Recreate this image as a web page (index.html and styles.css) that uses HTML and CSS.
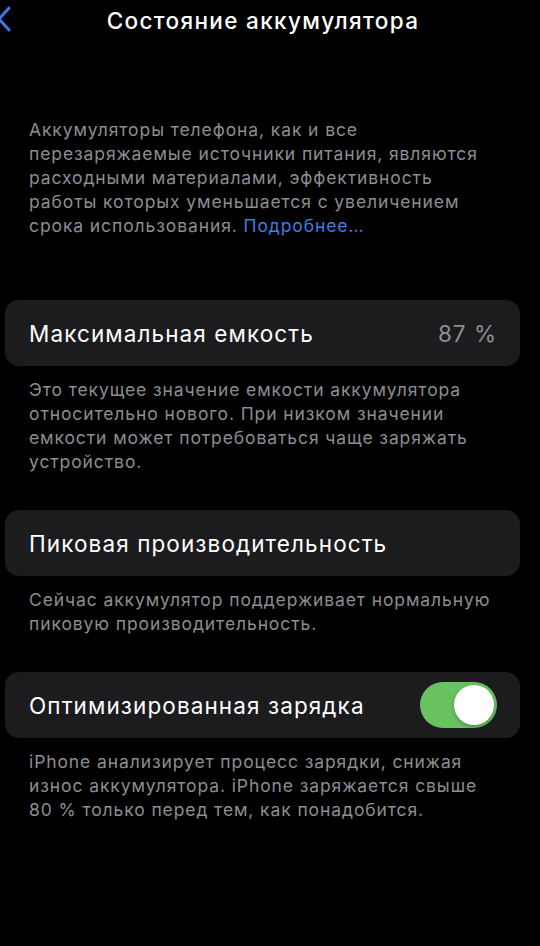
FILE: index.html
```html
<!DOCTYPE html>
<html lang="ru">
<head>
    <meta charset="UTF-8">
    <meta name="viewport" content="width=device-width, initial-scale=1.0">
    <title>Состояние аккумулятора</title>
    <link rel="stylesheet" href="styles.css">
</head>
<body>
    <div class="navbar">
        <button class="back-btn" aria-label="Назад">
            <svg width="14" height="30" viewBox="0 0 14 30">
                <path d="M11 4 L1 15 L11 26" fill="none" stroke="#3b78e7" stroke-width="3" stroke-linecap="round" stroke-linejoin="round"/>
            </svg>
        </button>
        <h1>Состояние аккумулятора</h1>
    </div>

    <p class="intro">Аккумуляторы телефона, как и все перезаряжаемые источники питания, являются расходными материалами, эффективность работы которых уменьшается с увеличением срока использования. <a href="#">Подробнее…</a></p>

    <div class="group group-first">
        <div class="cell">
            <span class="cell-label">Максимальная емкость</span>
            <span class="cell-value">87 %</span>
        </div>
        <p class="footnote">Это текущее значение емкости аккумулятора относительно нового. При низком значении емкости может потребоваться чаще заряжать устройство.</p>
    </div>

    <div class="group">
        <div class="cell">
            <span class="cell-label">Пиковая производительность</span>
        </div>
        <p class="footnote">Сейчас аккумулятор поддерживает нормальную пиковую производительность.</p>
    </div>

    <div class="group">
        <div class="cell">
            <span class="cell-label">Оптимизированная зарядка</span>
            <label class="switch">
                <input type="checkbox" class="switch-input" checked>
                <span class="switch-track"></span>
            </label>
        </div>
        <p class="footnote">iPhone анализирует процесс зарядки, снижая износ аккумулятора. iPhone заряжается свыше 80&nbsp;% только перед тем, как понадобится.</p>
    </div>
</body>
</html>
```

FILE: styles.css
```css
body {
    margin: 0;
    padding: 0;
    background-color: #000;
    color: #fff;
    font-family: Inter, "Noto Sans", sans-serif;
    -webkit-font-smoothing: antialiased;
}

.navbar {
    display: flex;
    align-items: center;
    justify-content: center;
    position: relative;
    height: 40px;
}

.navbar h1 {
    margin: 0 0 0 -14px;
    font-size: 22.5px;
    font-weight: 500;
    letter-spacing: 1.35px;
}

.back-btn {
    position: absolute;
    left: -2px;
    top: 4px;
    background: transparent;
    border: none;
    padding: 0;
    cursor: pointer;
}

.intro {
    margin: 78px 0 0;
    padding: 0 43px 0 29px;
    font-size: 17.5px;
    line-height: 24px;
    letter-spacing: 0.9px;
    color: #8d8d92;
}

.intro a {
    color: #3e7be6;
    text-decoration: none;
}

.group {
    margin-top: 36px;
}

.group-first {
    margin-top: 62px;
}

.cell {
    display: flex;
    align-items: center;
    justify-content: space-between;
    height: 66px;
    margin: 0 20px 0 5px;
    padding: 0 23px 0 24px;
    background-color: #1c1c1e;
    border-radius: 14px;
}

.cell-label {
    font-size: 22.5px;
    letter-spacing: 1.1px;
    color: #fff;
}

.cell-value {
    font-size: 22.5px;
    letter-spacing: 1px;
    color: #8e8e93;
}

.footnote {
    margin: 12px 0 0;
    padding: 0 43px 0 29px;
    font-size: 17.5px;
    line-height: 24px;
    letter-spacing: 0.9px;
    color: #8d8d92;
}

.switch {
    display: flex;
}

.switch-input {
    display: none;
}

.switch-track {
    position: relative;
    width: 77px;
    height: 46px;
    border-radius: 23px;
    background-color: #3a3a3c;
    transition: background-color 0.3s;
}

.switch-track::before {
    content: '';
    position: absolute;
    top: 3px;
    left: 3px;
    width: 40px;
    height: 40px;
    border-radius: 50%;
    background-color: #fff;
    box-shadow: 0 2px 4px rgba(0, 0, 0, 0.25);
    transition: transform 0.3s;
}

.switch-input:checked + .switch-track {
    background-color: #69c260;
}

.switch-input:checked + .switch-track::before {
    transform: translateX(31px);
}
```
